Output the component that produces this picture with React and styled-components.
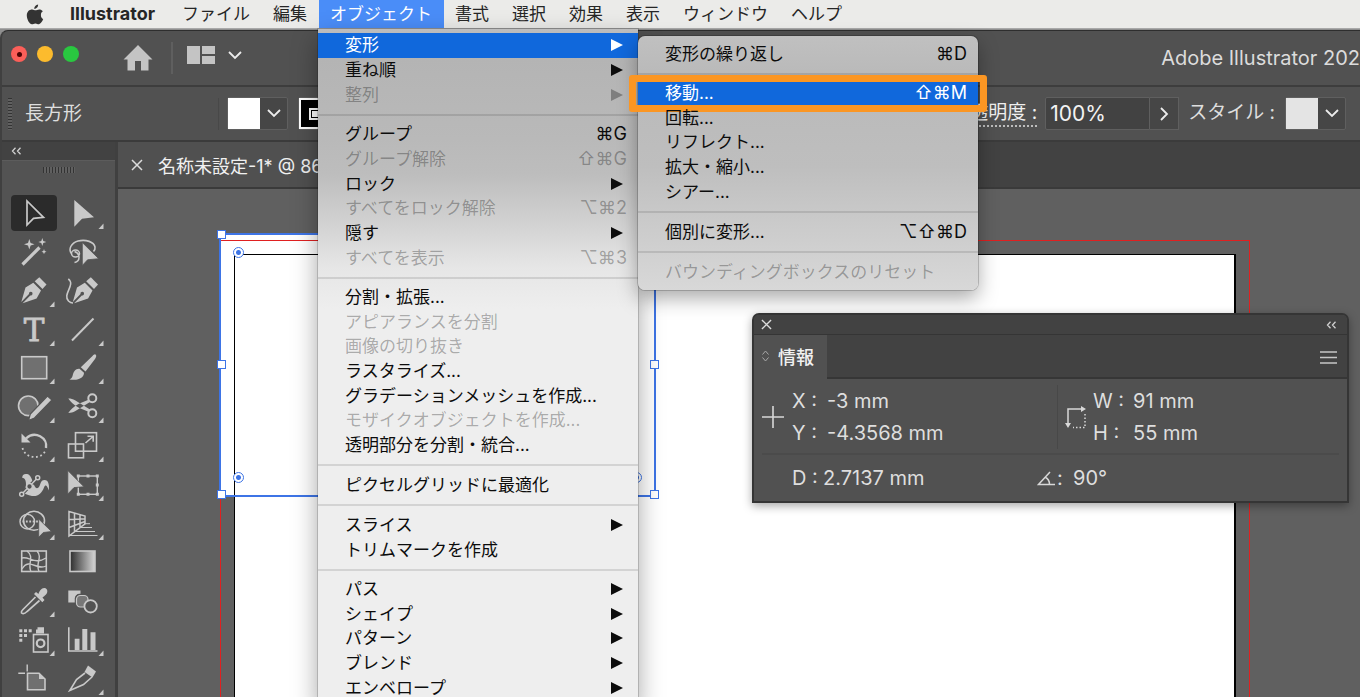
import React from 'react';
import styled, { createGlobalStyle, css } from 'styled-components';

const Global = createGlobalStyle`
  *, *::before, *::after { box-sizing: border-box; }
  html, body, #root { height: 100%; }
  body {
    margin: 0;
    overflow: hidden;
    background: #8f8f8f;
    font-family: Inter, "Noto Sans CJK JP", sans-serif;
    color: #e4e4e4;
  }
  button, input { font: inherit; color: inherit; }
  button { border: 0; padding: 0; margin: 0; background: none; text-align: left; }
  svg { display: block; }
`;

const Screen = styled.div`
  position: relative;
  display: flex;
  flex-direction: column;
  height: 100vh;
  overflow: hidden;
`;

/* ---------- system menu bar ---------- */

const MenuBar = styled.nav`
  display: flex;
  flex: none;
  align-items: stretch;
  height: 29px;
  padding-left: 26px;
  background: #ebebe9;
  border-bottom: 1px solid #a9a9a9;
  color: #262626;
`;

const AppleButton = styled.button`
  display: flex;
  align-items: center;
  width: 33px;
`;

const MenuTitle = styled.button`
  position: relative;
  padding: 0 12px 0 11px;
  font-size: ${(p) => (p.$app ? 18 : 17)}px;
  line-height: 28px;
  white-space: nowrap;
  font-weight: ${(p) => (p.$app ? 700 : 400)};
  ${(p) => p.$app && css`margin-right: 4px;`}
  ${(p) => p.$open && css`background: #4a8df8; color: #fff;`}
`;

/* ---------- drop-down menus ---------- */

const Menu = styled.div`
  position: absolute;
  z-index: 5;
  color: #0c0c0c;
  font-size: 17px;
  line-height: 24px;
`;

const MainMenu = styled(Menu)`
  top: 29px;
  left: 318px;
  width: 320px;
  padding: 4px 0;
  background: linear-gradient(#bdbdbd, #b4b4b4 30px, #b9b9b9 110px, #bdbdbd 145px, #d2d2d2 195px, #e6e6e6 238px, #eeeeee 280px);
  box-shadow: 0 0 0 1px rgba(0, 0, 0, 0.16), 0 10px 24px rgba(0, 0, 0, 0.36);
`;

const SubMenu = styled(Menu)`
  top: 36px;
  left: 638px;
  width: 340px;
  padding: 5px 0 6px;
  border-radius: 7px;
  background: linear-gradient(#c0c0c0, #b9b9b9 40px, #bebebe 130px, #c8c8c8 175px, #d8d8d8 254px);
  box-shadow: 0 0 0 1px rgba(0, 0, 0, 0.18), 0 8px 20px rgba(0, 0, 0, 0.34);
`;

const Section = styled.div`
  display: grid;
  grid-auto-rows: 1fr;
  min-height: ${(p) => p.$height}px;
`;

const Separator = styled.hr`
  height: 2px;
  margin: 7px 0 6px;
  border: 0;
  background: rgba(0, 0, 0, 0.11);
`;

const Item = styled.button`
  position: relative;
  display: flex;
  align-items: center;
  justify-content: space-between;
  padding: 0 11px 0 27px;
  width: 100%;
  white-space: nowrap;
  color: ${(p) => (p.$selected ? '#fff' : p.disabled ? 'rgba(0,0,0,0.3)' : 'inherit')};
  background: ${(p) => (p.$selected ? '#1068dc' : 'transparent')};
`;

const Shortcut = styled.kbd`
  font-family: Inter, "DejaVu Sans", sans-serif;
  font-size: 18px;
`;

const Arrow = styled.svg`
  width: 12px;
  height: 12px;
  margin-right: 4px;
  fill: currentColor;
`;

const Callout = styled.span`
  position: absolute;
  inset: -6px -9px;
  border: 7px solid #fb9623;
  border-radius: 3px;
  pointer-events: none;
`;

function MenuItem({ label, keys, submenu, disabled, selected, callout }) {
  return (
    <Item role="menuitem" disabled={disabled} $selected={selected} aria-haspopup={submenu ? 'menu' : undefined}>
      {label}
      {keys && <Shortcut>{keys}</Shortcut>}
      {submenu && (
        <Arrow viewBox="0 0 12 12" aria-hidden="true">
          <path d="M0 0L12 6L0 12Z" />
        </Arrow>
      )}
      {callout && <Callout />}
    </Item>
  );
}

function Sections({ sections }) {
  return sections.map((s, i) => (
    <React.Fragment key={i}>
      {i > 0 && <Separator />}
      <Section $height={s.height}>
        {s.items.map((item) => (
          <MenuItem key={item.label} {...item} />
        ))}
      </Section>
    </React.Fragment>
  ));
}

const objectMenu = [
  { height: 74, items: [
    { label: '変形', submenu: true, selected: true },
    { label: '重ね順', submenu: true },
    { label: '整列', submenu: true, disabled: true },
  ] },
  { height: 148, items: [
    { label: 'グループ', keys: '⌘G' },
    { label: 'グループ解除', keys: '⇧⌘G', disabled: true },
    { label: 'ロック', submenu: true },
    { label: 'すべてをロック解除', keys: '⌥⌘2', disabled: true },
    { label: '隠す', submenu: true },
    { label: 'すべてを表示', keys: '⌥⌘3', disabled: true },
  ] },
  { height: 172, items: [
    { label: '分割・拡張...' },
    { label: 'アピアランスを分割', disabled: true },
    { label: '画像の切り抜き', disabled: true },
    { label: 'ラスタライズ...' },
    { label: 'グラデーションメッシュを作成...' },
    { label: 'モザイクオブジェクトを作成...', disabled: true },
    { label: '透明部分を分割・統合...' },
  ] },
  { height: 25, items: [{ label: 'ピクセルグリッドに最適化' }] },
  { height: 50, items: [
    { label: 'スライス', submenu: true },
    { label: 'トリムマークを作成' },
  ] },
  { height: 123, items: [
    { label: 'パス', submenu: true },
    { label: 'シェイプ', submenu: true },
    { label: 'パターン', submenu: true },
    { label: 'ブレンド', submenu: true },
    { label: 'エンベロープ', submenu: true },
  ] },
];

const transformMenu = [
  { height: 25, items: [{ label: '変形の繰り返し', keys: '⌘D' }] },
  { height: 123, items: [
    { label: '移動...', keys: '⇧⌘M', selected: true, callout: true },
    { label: '回転...' },
    { label: 'リフレクト...' },
    { label: '拡大・縮小...' },
    { label: 'シアー...' },
  ] },
  { height: 25, items: [{ label: '個別に変形...', keys: '⌥⇧⌘D' }] },
  { height: 25, items: [{ label: 'バウンディングボックスのリセット', disabled: true }] },
];

/* ---------- application window ---------- */

const AppWindow = styled.div`
  display: flex;
  flex: 1;
  flex-direction: column;
  min-height: 0;
  margin-top: 1px;
  border-top: 1px solid #2e2e2e;
  border-left: 2px solid #404040;
  border-radius: 8px 0 0 0;
  background: #515151;
  overflow: hidden;
`;

const TitleBar = styled.header`
  display: flex;
  flex: none;
  align-items: center;
  height: 56px;
  padding-left: 9px;
  border-bottom: 2px solid #3d3d3d;
`;

const Lights = styled.div`
  display: flex;
  gap: 10px;
  margin-bottom: 8px;
`;

const Light = styled.button`
  display: grid;
  place-items: center;
  width: 16px;
  height: 16px;
  border-radius: 50%;
  background: ${(p) => p.$color};
  ${(p) => p.$edited && css`
    &::after { content: ''; width: 5px; height: 5px; border-radius: 50%; background: #4b0404; }
  `}
`;

const IconButton = styled.button`
  display: flex;
  margin-left: ${(p) => p.$gap}px;
  margin-bottom: ${(p) => p.$lift || 0}px;
  color: #c4c4c4;
`;

const Rule = styled.div`
  width: 2px;
  height: 32px;
  margin-left: ${(p) => p.$gap}px;
  background: #5f5f5f;
`;

const WindowTitle = styled.h1`
  margin: 0 0 0 auto;
  white-space: nowrap;
  font-size: 20px;
  line-height: 28px;
  font-weight: 400;
  color: #dcdcdc;
`;

const ControlBar = styled.div`
  display: flex;
  flex: none;
  align-items: center;
  height: 55px;
  padding: 0 14px 0 6px;
  border-bottom: 2px solid #3b3b3b;
  font-size: 19px;
`;

const Grip = styled.div`
  width: ${(p) => (p.$wide ? 32 : 4)}px;
  height: ${(p) => (p.$wide ? 6 : 32)}px;
  background: repeating-linear-gradient(${(p) => (p.$wide ? '90deg' : '180deg')}, #333 0 1px, #606060 1px 3px);
`;

const ObjectKind = styled.span`
  width: 194px;
  margin-left: 13px;
  border-right: 1px solid #484848;
  line-height: 32px;
  color: #dedede;
`;

const Picker = styled.button`
  display: flex;
  align-items: center;
  margin-left: ${(p) => p.$gap}px;
  height: 33px;
  border: 1px solid #5f5f5f;
  border-radius: 2px;
  background: #464646;
`;

const Swatch = styled.span`
  display: grid;
  place-items: center;
  width: 32px;
  height: 31px;
  background: ${(p) => p.$fill};
`;

const StrokeSwatch = styled(Swatch)`
  border: 2px solid #fff;
  &::after {
    content: '';
    width: 12px;
    height: 12px;
    border: 2px solid #fff;
    background: #fff;
    box-shadow: inset 0 0 0 1px #000;
  }
`;

const PickerArrow = styled.span`
  display: grid;
  place-items: center;
  width: 27px;
`;

const OpacityLabel = styled.label`
  margin-left: auto;
  margin-right: 8px;
  border-bottom: 2px dotted #bdbdbd;
  line-height: 24px;
  color: #efefef;
`;

const OpacityInput = styled.input`
  width: 105px;
  height: 33px;
  padding: 0 4px;
  border: 1px solid #5f5f5f;
  border-radius: 2px 0 0 2px;
  background: #424242;
  font-size: 21px;
  color: #f3f3f3;
`;

const OpacityMore = styled.button`
  display: grid;
  place-items: center;
  width: 29px;
  height: 33px;
  border: 1px solid #5f5f5f;
  border-left: 0;
  background: #464646;
`;

const StyleLabel = styled.span`
  margin-left: 9px;
  padding-bottom: 2px;
  line-height: 24px;
  color: #dedede;
`;

const Workspace = styled.div`
  display: grid;
  flex: 1;
  grid-template-columns: 116px 1fr;
  min-height: 0;
`;

const ToolPanel = styled.aside`
  display: flex;
  flex-direction: column;
  align-items: center;
  border-right: 3px solid #404040;
  background: #535353;
`;

const ToolHeader = styled.button`
  align-self: stretch;
  flex: none;
  height: 19px;
  margin-bottom: 6px;
  padding-left: 9px;
  background: #424242;
  border-bottom: 1px solid #5c5c5c;
`;

const ToolGrid = styled.div`
  display: grid;
  flex: none;
  grid-template-columns: 49px 49px;
  grid-auto-rows: 1fr;
  align-self: flex-start;
  height: 504px;
  margin-top: 21px;
  margin-left: 8px;
`;

const Tool = styled.button`
  align-self: center;
  width: 48px;
  height: 38px;
  border: 1px solid transparent;
  border-radius: 5px;
  background: ${(p) => (p.$active ? '#2b2b2b' : 'transparent')};
  background-clip: padding-box;
  color: #c9c9c9;
  svg { margin: -1px; }
`;

const Document = styled.main`
  display: flex;
  flex-direction: column;
  min-width: 0;
`;

const TabStrip = styled.div`
  display: flex;
  flex: none;
  height: 47px;
  border-bottom: 2px solid #3a3a3a;
  background: #424242;
`;

const DocumentTab = styled.button`
  display: flex;
  align-items: center;
  gap: 15px;
  width: 440px;
  padding-left: 13px;
  background: #505050;
  font-size: 18px;
  white-space: nowrap;
  color: #f0f0f0;
`;

const Canvas = styled.div`
  position: relative;
  flex: 1;
  overflow: hidden;
  background: #606060;
`;

const ObjectFill = styled.div`
  position: absolute;
  left: 102px;
  top: 45px;
  width: 435px;
  height: 262px;
  background: #fff;
`;

const Artboard = styled.div`
  position: absolute;
  left: 116px;
  top: 65px;
  width: 1002px;
  height: 620px;
  border: 1px solid #000;
  border-right-width: 2px;
  background: #fff;
`;

const Bleed = styled.div`
  position: absolute;
  left: 102px;
  top: 51px;
  width: 1030px;
  height: 640px;
  border: 1px solid #e02020;
`;

const Selection = styled.div`
  position: absolute;
  left: 101px;
  top: 44px;
  width: 437px;
  height: 264px;
  border: 2px solid #3d74e6;
`;

const Handle = styled.span`
  position: absolute;
  left: ${(p) => p.$x}%;
  top: ${(p) => p.$y}%;
  width: 9px;
  height: 9px;
  margin: -5px -4px;
  border: 1px solid #3d74e6;
  background: #fff;
`;

const CornerWidget = styled.span`
  position: absolute;
  ${(p) => p.$side}: 12px;
  ${(p) => p.$edge}: 12px;
  width: 11px;
  height: 11px;
  border: 1px solid #3d74e6;
  border-radius: 50%;
  background: radial-gradient(#3d74e6 0 2px, #fff 3px);
`;

/* ---------- info palette ---------- */

const Palette = styled.section`
  position: absolute;
  z-index: 4;
  top: 313px;
  right: 11px;
  width: 597px;
  border: 2px solid #353535;
  border-radius: 7px 7px 0 0;
  background: #515151;
  box-shadow: 0 3px 10px rgba(0, 0, 0, 0.35);
  font-size: 20px;
  color: #dedede;
`;

const PaletteHeader = styled.div`
  display: flex;
  align-items: center;
  justify-content: space-between;
  height: 20px;
  padding: 0 10px 0 7px;
  border-bottom: 1px solid #353535;
  border-radius: 5px 5px 0 0;
  background: #424242;
`;

const PaletteTabs = styled.div`
  display: flex;
  align-items: center;
  height: 44px;
  padding-right: 10px;
  background: linear-gradient(#363636, #363636) bottom / 100% 2px no-repeat #424242;
`;

const PaletteTab = styled.button`
  display: flex;
  align-items: center;
  gap: 8px;
  align-self: stretch;
  width: 73px;
  padding-left: 7px;
  padding-bottom: 2px;
  background: #515151;
  font-size: 18px;
  font-weight: 500;
  color: #f0f0f0;
`;

const PaletteMenu = styled.button`
  margin-left: auto;
`;

const PaletteBody = styled.div`
  padding: 6px 8px 7px 8px;
`;

const Readouts = styled.div`
  display: grid;
  grid-template-columns: 295px 1fr;
  ${(p) => p.$ruled && css`padding-bottom: 4px; border-bottom: 2px solid #4b4b4b;`}
`;

const Readout = styled.div`
  display: flex;
  align-items: center;
  gap: ${(p) => p.$gap}px;
  ${(p) => p.$ruled && css`border-left: 1px solid #484848; padding-left: 6px;`}
`;

const Values = styled.dl`
  display: grid;
  grid-template-columns: ${(p) => p.$label}px auto;
  margin: 0;
  padding-left: ${(p) => p.$indent || 0}px;
  line-height: 32px;
  white-space: nowrap;
  dd { margin: 0; }
`;

const LastRow = styled(Readouts)`
  grid-template-columns: 275px 1fr;
  padding: 7px 0 0;
`;

/* ---------- small drawings ---------- */

const Chevron = ({ d = 'M1 1L7 7L13 1', w = 14, h = 9 }) => (
  <svg width={w} height={h} viewBox={`0 0 ${w} ${h}`} fill="none" stroke="#ececec" strokeWidth="1.800" aria-hidden="true">
    <path d={d} />
  </svg>
);

const Collapse = () => (
  <svg width="11" height="8" viewBox="0 0 11 8" fill="none" stroke="#d0d0d0" strokeWidth="1.3" aria-hidden="true">
    <path d="M4.5 .8L1.5 4L4.5 7.2M9.5 .8L6.5 4L9.5 7.2" />
  </svg>
);

const Cross = ({ size }) => (
  <svg width={size} height={size} viewBox="0 0 12 12" stroke="#dcdcdc" strokeWidth="1.5" aria-hidden="true">
    <path d="M1 1L11 11M11 1L1 11" />
  </svg>
);

const AppleLogo = () => (
  <svg width="18" height="21" viewBox="0 0 18 21" fill="#333" aria-hidden="true">
    <path d="M12.1 .5c.2 2.300-1.700 4.400-3.800 4.400C8 2.800 9.900.8 12.100.5Z" />
    <path d="M14.900 10.900c0-2 1.100-3 2-3.600-1.100-1.700-2.900-1.900-3.700-1.900-1.600 0-2.900.9-3.700.9-.8 0-2-.9-3.300-.9C3.300 5.400.8 7.500.8 11.400c0 4.100 2.900 8.800 5.100 8.800 1.200 0 1.900-.8 3.500-.8s2.100.8 3.400.8c1.800 0 3.700-3.100 4.400-5.100-1.500-.7-2.300-2.200-2.300-4.200Z" />
  </svg>
);

const S = { fill: 'none', stroke: 'currentColor', strokeWidth: 1.6 };
const F = { fill: 'currentColor' };
const BG = '#535353';

const penBody = (
  <>
    <path {...F} d="M29.300 5.300L36.500 12.500L32.500 17L24.700 9.300Z" />
    <path {...F} d="M23.300 10.800L31 18.600L26.600 26.500L12.600 31.300L20.300 23.400A1.800 1.800 0 1 0 19 22.100L11.300 29.900L15.500 15.600Z" />
  </>
);

const tools = [
  ['選択', false, <path {...S} strokeWidth="1.7" d="M17 7V31L23.500 24.400L33.500 23.300Z" />],
  ['ダイレクト選択', true, <path {...F} d="M15.300 6V32.700L23 24.700L35 23.300Z" />],
  ['自動選択', false, <>
    <path {...S} strokeWidth="3.200" d="M12.500 31.500L29.500 14.500" />
    <path {...F} d="M19.300 6L20.600 10L24.500 11.300L20.600 12.600L19.300 16.600L18 12.600L14 11.300L18 10ZM32.300 5L33.300 8L36.300 9L33.300 10L32.300 13L31.300 10L28.300 9L31.300 8ZM34 16L34.700 18L36.500 18.700L34.700 19.400L34 21.300L33.300 19.400L31.500 18.700L33.300 18Z" />
  </>],
  ['なげなわ', false, <>
    <path {...S} d="M12.500 20.500C9 16.500 12 10 19 8C27 6 35 9 36 14C36.300 16 35.500 17.500 34.500 18.500" />
    <path {...S} strokeWidth="1.500" d="M12.500 20.500A4 3.500 0 1 1 20.500 20.500A4 3.500 0 1 1 12.500 20.500M15.500 18.500C21 20 22 28 15.500 29.500" />
    <path {...F} stroke={BG} strokeWidth=".8" d="M23.300 9.500V32.500L28.600 26.800L39.700 25.700Z" />
  </>],
  ['ペン', true, penBody],
  ['曲線', false, <>
    <g transform="translate(2.500 0)">{penBody}</g>
    <path {...S} d="M9.300 6.800C17 13 3 22 9.500 29C11 30.500 12.500 31 14 31" />
  </>],
  ['文字', true, <text x="24" y="30" textAnchor="middle" fontFamily="DejaVu Serif" fontSize="31" fill="currentColor" stroke="currentColor" strokeWidth=".8">T</text>],
  ['直線', true, <path {...S} strokeWidth="2" d="M13 29.500L34.500 7.500" />],
  ['長方形', true, <rect {...S} fill="#707070" x="11.700" y="7.700" width="25" height="22" />],
  ['ブラシ', true, <>
    <path {...F} d="M36.500 5.500C38 6.500 37 8.500 36 10L26.500 22.500L21.800 18.300L33.500 7C34.500 6 35.500 5 36.500 5.500Z" />
    <path {...F} d="M20.500 19.800L25 23.800C25 28.500 20 32 10.500 30.500C14.500 29 13 25.500 15.500 22C16.800 20.300 19 19.500 20.500 19.800Z" />
  </>],
  ['Shaper', true, <>
    <circle {...S} fill="#707070" cx="18.300" cy="17.800" r="9.800" />
    <path {...F} stroke={BG} strokeWidth="1.200" d="M37.500 8L42 12L24.500 30L18.500 32.500L20.300 26Z" />
  </>],
  ['はさみ', true, <>
    <circle {...S} strokeWidth="2" cx="33.300" cy="10.300" r="4" />
    <circle {...S} strokeWidth="2" cx="33.300" cy="25.300" r="4" />
    <path {...F} d="M9.300 10.500C12 10.500 14 11 16 12.200L31 21.500L29.500 23.800L21 20.200C17 18.500 12 14.500 9.300 10.500ZM9.300 25C12 25 14 24.500 16 23.300L31 14L29.500 11.700L21 15.300C17 17 12 21 9.300 25Z" />
  </>],
  ['回転', true, <>
    <path {...S} strokeWidth="2.400" d="M16 11.500C25 3 38 11 36 21" />
    <path {...F} d="M11.500 6.500V15.500H20.500Z" />
    <path {...S} strokeWidth="1.800" strokeDasharray="1.800 2.600" d="M12.500 21C15 31.500 31 33.500 35.500 23.500" />
  </>],
  ['拡大・縮小', true, <>
    <rect {...S} x="16.500" y="5.700" width="21" height="18.500" />
    <rect {...S} x="9.500" y="17" width="15" height="13.800" />
    <path {...S} d="M26.500 16L34 9.500M28.500 9.300H34.200V14.800" />
  </>],
  ['線幅', true, <>
    <path {...F} d="M12.300 12C12 9 14 7.500 17 8C20 8.500 21 11 22.500 15C24.500 21 26 23.500 28.500 21.500C31 19 30 14 34.500 14C38.500 14 39.500 19 38.800 24.500C37 19.500 35.500 18 34 21.500C31.500 28 27 31.500 20 29.500C15.500 28.500 12 26.500 15 22.500C17 19.500 16 11 12.300 12Z" />
    <path stroke={BG} strokeWidth="3.500" d="M11.700 28.300L27.700 11.700" />
    <path {...S} strokeWidth="1.500" d="M11.700 28.300L27.700 11.700" />
    <g {...S} fill={BG} strokeWidth="1.500"><circle cx="11.700" cy="28.300" r="2" /><circle cx="19.500" cy="20.500" r="2.900" /><circle cx="27.700" cy="11.700" r="2" /></g>
  </>],
  ['自由変形', true, <>
    <rect {...S} strokeWidth="1.400" x="19.300" y="10" width="19" height="18.300" />
    <path {...F} d="M17.800 8.500h3v3h-3zM27.500 8.500h3v3h-3zM36.800 8.500h3v3h-3zM36.800 17.500h3v3h-3zM36.800 26.800h3v3h-3zM27.500 26.800h3v3h-3zM17.800 26.800h3v3h-3z" />
    <path {...F} stroke={BG} strokeWidth=".8" d="M8.800 4.500V28L15 21.600L25 20.800Z" />
  </>],
  ['シェイプ形成', true, <>
    <ellipse {...S} cx="24" cy="15.800" rx="10.500" ry="9.500" />
    <circle {...S} strokeWidth="1.400" cx="17.300" cy="16.700" r="7.300" />
    <path {...S} strokeWidth="1.800" strokeDasharray="1.800 1.600" d="M12.500 16.500H28" />
    <path {...F} stroke={BG} strokeWidth=".8" d="M28.700 14V32.300L33.300 27.500L41.500 26.500Z" />
  </>],
  ['遠近グリッド', true, <>
    <path {...S} strokeWidth="1.500" d="M10 6.500V31L26 18.800V11ZM10 14.500L26 13.800M10 22.500L26 16.500M15.500 8V26.500M21 9.500V22.500" />
    <path {...S} strokeWidth="1" d="M25 18.700H31M21 22.500H33M16 26.500H36M10 30.500H38.500" />
  </>],
  ['メッシュ', false, <>
    <rect {...S} x="11.700" y="8" width="24.600" height="20.500" />
    <path {...S} strokeWidth="1.400" d="M17 8C25 14 17 21 21 28.500M27 8C33 15 25 20 29 28.500M12 15C19 13 25 22 36 15M12 26C19 14 27 28 36 23" />
  </>],
  ['グラデーション', false, <>
    <defs><linearGradient id="toolGradient"><stop offset="0" stopColor="#2d2d2d" /><stop offset="1" stopColor="#d6d6d6" /></linearGradient></defs>
    <rect {...S} fill="url(#toolGradient)" x="11" y="8" width="25" height="20.500" />
  </>],
  ['スポイト', true, <>
    <path {...S} strokeWidth="1.700" d="M25.500 15L13 27.500C11.500 29 10.500 31 12.500 31.500C14 32 15.500 31 17 29.500L29.500 18.500" />
    <path {...F} d="M24 12L26 10L28.500 12C29 9 32 5.500 34.500 6C38 6.500 38 10.500 36 12.500C34.500 14 33 15 32.500 15.500L34.500 18L32.300 20.200Z" />
  </>],
  ['ブレンド', false, <>
    <path {...F} d="M9.300 8.500H21.500V20.500H9.300Z" />
    <rect {...S} strokeWidth="1.500" stroke={BG} fill={BG} x="16.500" y="12.500" width="13" height="13" rx="4" />
    <rect {...S} strokeWidth="1.200" fill="#777" x="17.500" y="13.500" width="11.500" height="11.500" rx="4" />
    <circle {...S} strokeWidth="1.800" fill={BG} cx="31.600" cy="24.300" r="6.200" />
  </>],
  ['シンボルスプレー', true, <>
    <rect {...S} x="23.500" y="13.500" width="14.500" height="17.500" />
    <path {...F} d="M26 12.500V8.500H27.500V6.300H34V12.500Z" />
    <circle {...S} strokeWidth="2.200" cx="30.600" cy="22.300" r="3.800" />
    <path {...F} d="M9.300 8.300h3v3h-3zM14 8.300h3v3h-3zM18.700 8.300h3v3h-3zM9.300 13h3v3h-3zM14 13h3v3h-3zM9.300 17.700h3v3h-3z" />
  </>],
  ['グラフ', true, <>
    <path {...S} d="M9.800 6.300V30H38.500" />
    <path {...F} d="M15.700 17.700h4.800V29h-4.800zM23.300 8h5V29h-5zM31.500 11.300h5V29h-5z" />
  </>],
  ['アートボード', false, <>
    <path {...S} fill="#707070" d="M17.500 13.300H29L35 19V29.700H17.500Z" />
    <path {...F} d="M29 13.300L35 19H29Z" />
    <path {...S} strokeWidth="1.400" d="M17.200 4.500V11.500M8.300 13.200H15" />
  </>],
  ['スライス', true, <>
    <path {...F} d="M29 5.500L37 11.500L33.500 17.500L25.500 12Z" />
    <path {...S} strokeWidth="1.600" d="M26 13L17.500 19.500L10.800 30.500L24.500 24.500L33 17" />
  </>],
];

function ToolIcon({ more, children }) {
  return (
    <svg width="48" height="38" viewBox="0 0 48 38" aria-hidden="true">
      {children}
      {more && <path d="M44.500 29.500V35H39.500Z" fill="currentColor" />}
    </svg>
  );
}

const menuTitles = ['ファイル', '編集', 'オブジェクト', '書式', '選択', '効果', '表示', 'ウィンドウ', 'ヘルプ'];

export default function App() {
  return (
    <Screen>
      <Global />
      <MenuBar>
        <AppleButton aria-label="Apple"><AppleLogo /></AppleButton>
        <MenuTitle $app>Illustrator</MenuTitle>
        {menuTitles.map((t) => (
          <MenuTitle key={t} $open={t === 'オブジェクト'}>{t}</MenuTitle>
        ))}
      </MenuBar>

      <AppWindow>
        <TitleBar>
          <Lights>
            <Light $color="#fb5f59" $edited aria-label="閉じる" />
            <Light $color="#fcbb2d" aria-label="しまう" />
            <Light $color="#29c840" aria-label="拡大" />
          </Lights>
          <IconButton $gap={44} aria-label="ホーム">
            <svg width="30" height="26" viewBox="0 0 30 26" fill="currentColor"><path d="M15 0L29.500 14.500H25.500V25.500H18V16H12V25.500H4.500V14.500H.5Z" /></svg>
          </IconButton>
          <Rule $gap={18} />
          <IconButton $gap={14} $lift={6} aria-label="ワークスペース">
            <svg width="28" height="18" viewBox="0 0 28 18" fill="currentColor"><path d="M0 0H13V18H0ZM15 0H28V8H15ZM15 10H28V18H15Z" /></svg>
          </IconButton>
          <IconButton $gap={13} $lift={6} aria-label="ワークスペースの切り替え"><Chevron /></IconButton>
          <WindowTitle>Adobe Illustrator 202</WindowTitle>
        </TitleBar>

        <ControlBar>
          <Grip />
          <ObjectKind>長方形</ObjectKind>
          <Picker $gap={8} aria-label="塗り">
            <Swatch $fill="#fff" />
            <PickerArrow><Chevron /></PickerArrow>
          </Picker>
          <Picker $gap={10} aria-label="線">
            <StrokeSwatch $fill="#000" />
            <PickerArrow><Chevron /></PickerArrow>
          </Picker>
          <OpacityLabel htmlFor="opacity">不透明度 :</OpacityLabel>
          <OpacityInput id="opacity" defaultValue="100%" />
          <OpacityMore aria-label="不透明度スライダー"><Chevron d="M1 1L7 7L1 13" w={9} h={14} /></OpacityMore>
          <StyleLabel id="style-label">スタイル :</StyleLabel>
          <Picker $gap={10} aria-labelledby="style-label">
            <Swatch $fill="#e4e4e4" />
            <PickerArrow><Chevron /></PickerArrow>
          </Picker>
        </ControlBar>

        <Workspace>
          <ToolPanel>
            <ToolHeader aria-label="パネルを折りたたむ"><Collapse /></ToolHeader>
            <Grip $wide />
            <ToolGrid>
              {tools.map(([name, more, art], i) => (
                <Tool key={name} aria-label={name} $active={i === 0}>
                  <ToolIcon more={more}>{art}</ToolIcon>
                </Tool>
              ))}
            </ToolGrid>
          </ToolPanel>
          <Document>
            <TabStrip>
              <DocumentTab><Cross size={12} />名称未設定-1* @ 86</DocumentTab>
            </TabStrip>
            <Canvas>
              <ObjectFill />
              <Artboard />
              <Bleed />
              <Selection>
                {[[0, 0], [50, 0], [100, 0], [0, 50], [100, 50], [0, 100], [50, 100], [100, 100]].map(([x, y]) => (
                  <Handle key={`${x}-${y}`} $x={x} $y={y} />
                ))}
                <CornerWidget $side="left" $edge="top" />
                <CornerWidget $side="right" $edge="top" />
                <CornerWidget $side="left" $edge="bottom" />
                <CornerWidget $side="right" $edge="bottom" />
              </Selection>
            </Canvas>
          </Document>
        </Workspace>
      </AppWindow>

      <Palette aria-label="情報">
        <PaletteHeader>
          <button aria-label="閉じる"><Cross size={11} /></button>
          <button aria-label="折りたたむ"><Collapse /></button>
        </PaletteHeader>
        <PaletteTabs>
          <PaletteTab>
            <svg width="9" height="12" viewBox="0 0 9 12" fill="none" stroke="#a8a8a8" aria-hidden="true"><path d="M1.500 4.500L4.500 1L7.500 4.500M1.500 7.500L4.500 11L7.500 7.500" /></svg>
            情報
          </PaletteTab>
          <PaletteMenu aria-label="パネルメニュー">
            <svg width="17" height="13" viewBox="0 0 17 13" stroke="#c6c6c6" strokeWidth="1.700"><path d="M0 1H17M0 6.500H17M0 12H17" /></svg>
          </PaletteMenu>
        </PaletteTabs>
        <PaletteBody>
          <Readouts $ruled>
            <Readout $gap={8}>
              <svg width="22" height="22" viewBox="0 0 22 22" stroke="#d8d8d8" strokeWidth="1.600" aria-hidden="true"><path d="M11 0V22M0 11H22" /></svg>
              <Values $label={35}>
                <dt>X :</dt><dd>-3 mm</dd>
                <dt>Y :</dt><dd>-4.3568 mm</dd>
              </Values>
            </Readout>
            <Readout $gap={6} $ruled>
              <svg width="23" height="24" viewBox="0 0 23 24" fill="none" stroke="#d8d8d8" strokeWidth="1.500" aria-hidden="true">
                <path d="M4 20V4H18" />
                <path d="M17 1L22 4L17 7ZM1 18L4 23L7 18Z" fill="#d8d8d8" stroke="none" />
                <path d="M21 9V22.500H9" strokeDasharray="1.500 2" />
              </svg>
              <Values $label={40}>
                <dt>W :</dt><dd>91 mm</dd>
                <dt>H :</dt><dd>55 mm</dd>
              </Values>
            </Readout>
          </Readouts>
          <LastRow>
            <Readout $gap={0}>
              <Values $label={31} $indent={30}><dt>D :</dt><dd>2.7137 mm</dd></Values>
            </Readout>
            <Readout $gap={2}>
              <svg width="18" height="16" viewBox="0 0 18 16" fill="none" stroke="#d8d8d8" strokeWidth="1.500" aria-hidden="true"><path d="M18 14.500H1.500L13 2M8 7C11 8.500 12.500 11 12.500 14.500" /></svg>
              <Values $label={16}><dt>:</dt><dd>90°</dd></Values>
            </Readout>
          </LastRow>
        </PaletteBody>
      </Palette>

      <MainMenu role="menu" aria-label="オブジェクト"><Sections sections={objectMenu} /></MainMenu>
      <SubMenu role="menu" aria-label="変形"><Sections sections={transformMenu} /></SubMenu>
    </Screen>
  );
}
